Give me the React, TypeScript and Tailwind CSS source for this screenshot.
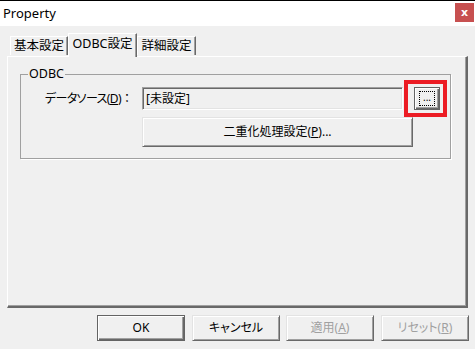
import React from 'react'

const FONT = "font-['Noto_Sans','Noto_Sans_CJK_JP',sans-serif] [font-feature-settings:'palt']"

function Btn({
  children,
  isDefault = false,
  disabled = false,
  className = ''
}: {
  children: React.ReactNode
  isDefault?: boolean
  disabled?: boolean
  className?: string
}) {
  const frame = isDefault
    ? 'border border-[#646464] shadow-[inset_1px_1px_0_#fff,inset_-1px_-1px_0_#696969,inset_-2px_-2px_0_#a0a0a0]'
    : 'border border-t-[#e3e3e3] border-l-[#e3e3e3] border-r-[#696969] border-b-[#696969] shadow-[inset_1px_1px_0_#fff,inset_-1px_-1px_0_#a0a0a0]'
  return (
    <div
      className={`flex items-center justify-center bg-[#f0f0f0] text-[12px] leading-none ${frame} ${
        disabled ? 'text-[#a0a0a0]' : 'text-black'
      } ${className}`}
    >
      {children}
    </div>
  )
}

function Tab({ label, selected = false, className = '' }: { label: string; selected?: boolean; className?: string }) {
  return (
    <div
      className={`flex items-center justify-center bg-[#f0f0f0] text-[12.5px] leading-none border-l border-t border-white border-r border-r-[#696969] shadow-[inset_-1px_0_0_#a0a0a0] ${
        selected ? 'h-[24px] -mb-px pb-[3px]' : 'h-[19px] mb-px'
      } ${className}`}
    >
      {label}
    </div>
  )
}

export default function App() {
  return (
    <div className={`w-[475px] h-[349px] bg-[#f0f0f0] flex flex-col overflow-hidden text-black ${FONT}`}>
      {/* Title bar */}
      <div className="h-[26px] shrink-0 border-t border-black bg-white flex items-start justify-between">
        <span className="pl-[3px] pt-[4px] text-[13px] leading-[16px]">Property</span>
        <div className="mt-[2px] mr-px w-[19px] h-[19px] bg-[#c75050] flex items-center justify-center text-white text-[11px] font-bold leading-none font-['DejaVu_Sans',sans-serif]">
          x
        </div>
      </div>

      {/* Tabs + page */}
      <div className="px-[7px] pt-[7px]">
        <div className="relative z-10 flex items-end h-[23px] pl-[3px]">
          <Tab label="基本設定" className="w-[58px]" />
          <Tab label="ODBC設定" selected className="w-[69px]" />
          <Tab label="詳細設定" className="w-[59px]" />
        </div>

        <div className="h-[252px] border-l border-t border-white border-r-2 border-b-2 border-r-[#696969] border-b-[#696969] shadow-[inset_-1px_-1px_0_#a0a0a0] pl-[12px]">
          {/* Group box */}
          <div className="relative mt-[17px] w-[431px] h-[85px] border border-[#a0a0a0] shadow-[1px_1px_0_#fff]">
            <span className="absolute -top-[9px] left-[7px] bg-[#f0f0f0] px-px text-[12.5px] leading-[16px]">ODBC</span>

            <div className="flex items-center mt-[12px]">
              <span className="w-[112px] flex justify-end text-[12px] leading-none whitespace-nowrap">
                <span className="tracking-[-0.6px]">
                  データソース(<span className="underline">D</span>)
                </span>
                <span className="[font-feature-settings:normal]">：</span>
              </span>
              <div className="ml-[9px] w-[261px] h-[23px] flex items-center pl-[3px] text-[12px] leading-none border border-t-[#a0a0a0] border-l-[#a0a0a0] border-r-white border-b-white shadow-[inset_1px_1px_0_#696969,inset_-1px_-1px_0_#e3e3e3]">
                [未設定]
              </div>
              <div className="relative ml-[11px]">
                <Btn isDefault className="w-[26px] h-[23px]">
                  <span className="w-[16px] h-[15px] border border-dotted border-black flex items-center justify-center text-[10px] leading-none pb-[3px]">
                    ...
                  </span>
                </Btn>
                <div className="absolute -left-[10px] -top-[7px] w-[43px] h-[37px] border-[4px] border-[#ec1c24]" />
              </div>
            </div>

            <Btn className="mt-[7px] ml-[121px] w-[271px] h-[30px]">
              二重化処理設定(<span className="underline">P</span>)...
            </Btn>
          </div>
        </div>
      </div>

      {/* Dialog buttons */}
      <div className="mt-[7px] flex gap-[7px] pl-[97px]">
        <Btn isDefault className="w-[88px] h-[26px]">OK</Btn>
        <Btn className="w-[88px] h-[26px]">キャンセル</Btn>
        <Btn disabled className="-ml-px w-[88px] h-[26px]">
          適用(<span className="underline">A</span>)
        </Btn>
        <Btn disabled className="w-[88px] h-[26px]">
          リセット(<span className="underline">R</span>)
        </Btn>
      </div>
    </div>
  )
}
